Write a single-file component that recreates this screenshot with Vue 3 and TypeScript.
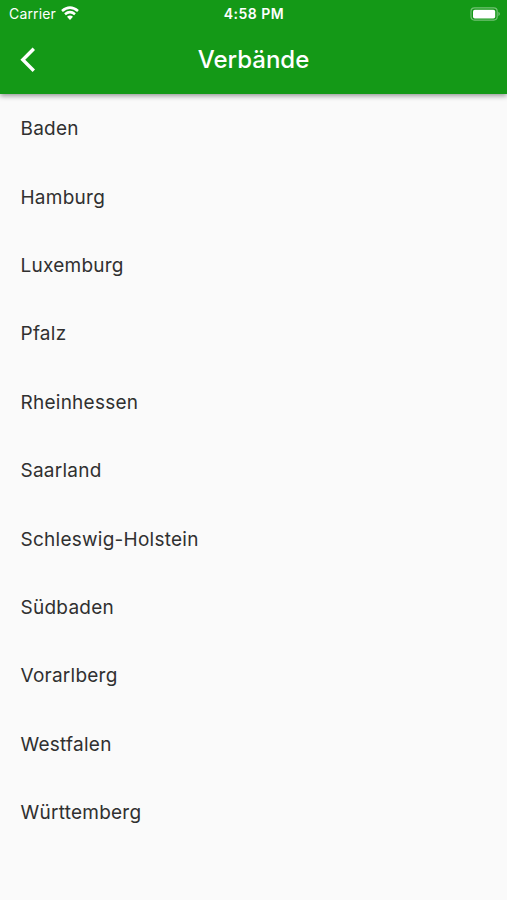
<script setup lang="ts">
const associations: string[] = [
  'Baden',
  'Hamburg',
  'Luxemburg',
  'Pfalz',
  'Rheinhessen',
  'Saarland',
  'Schleswig-Holstein',
  'Südbaden',
  'Vorarlberg',
  'Westfalen',
  'Württemberg',
]
</script>

<template>
  <main class="screen">
    <header class="top">
      <div class="status">
        <div class="carrier">
          <span>Carrier</span>
          <svg class="wifi" viewBox="0 0 18 14" width="18" height="14">
            <path d="M1 5Q9-1.8 17 5M4 8.2Q9 4 14 8.2" fill="none" stroke="#fff" stroke-width="2.6" />
            <path d="M6 10.8Q9 8.2 12 10.8L9 13.9Z" fill="#fff" />
          </svg>
        </div>
        <span class="time">4:58 PM</span>
        <svg class="battery" viewBox="0 0 31 14" width="31" height="14">
          <rect x="1" y=".9" width="26.2" height="12.2" rx="3.5" fill="none" stroke="#fff" stroke-opacity=".4" stroke-width="1.2" />
          <rect x="3" y="2.7" width="22.2" height="8.8" rx="1.8" fill="#fff" />
          <path d="M28.5 4.8Q31 7 28.5 9.2Z" fill="#fff" fill-opacity=".5" />
        </svg>
      </div>
      <div class="bar">
        <button class="back" aria-label="Zurück">
          <svg viewBox="0 0 16 26" width="16" height="26">
            <path d="M13.8 1.8L2.8 12.8L13.8 23.8" fill="none" stroke="#fff" stroke-width="3.4" />
          </svg>
        </button>
        <h1>Verbände</h1>
        <span></span>
      </div>
    </header>
    <ul class="list">
      <li v-for="name in associations" :key="name">{{ name }}</li>
    </ul>
  </main>
</template>

<style>
body { margin: 0; background: #fafafa; }
</style>

<style scoped>
.screen { min-height: 900px; background: #fafafa; font-family: Inter, "Liberation Sans", sans-serif; }
.top { height: 94px; background: #149917; color: #fff; box-shadow: 0 2px 5px rgba(0, 0, 0, .4); }
.status { display: grid; grid-template-columns: 1fr auto 1fr; align-items: center; height: 27px; padding: 0 6px 0 9px; font-size: 14px; }
.carrier { display: flex; align-items: center; gap: 5.5px; letter-spacing: .15px; }
.wifi { margin-top: -1px; }
.time { margin-right: 2px; font-weight: 600; font-size: 14px; letter-spacing: .5px; }
.battery { justify-self: end; }
.bar { display: grid; grid-template-columns: 1fr auto 1fr; align-items: center; height: 65px; padding: 0 20px; }
.back { display: flex; width: 16px; padding: 0; border: 0; background: none; }
h1 { margin: 0; font-size: 24px; font-weight: 500; }
.list { margin: 0; padding: .6px 0 0; list-style: none; }
li { display: flex; align-items: center; height: 68.4px; padding: 0 20.5px; color: #303030; font-size: 19px; letter-spacing: .25px; }
</style>
